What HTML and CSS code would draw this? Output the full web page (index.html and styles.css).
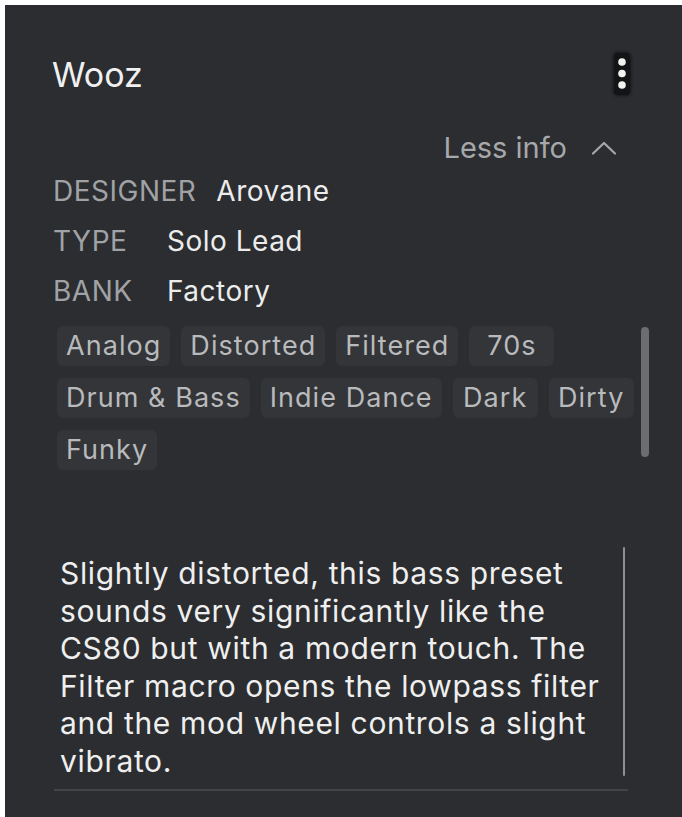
FILE: index.html
```html
<!DOCTYPE html>
<html lang="en">
<head>
<meta charset="utf-8">
<title>Wooz</title>
<link rel="stylesheet" href="styles.css">
</head>
<body>
<div class="panel">
  <div class="header">
    <div class="title">Wooz</div>
    <div class="kebab">
      <svg width="16" height="42" viewBox="0 0 16 42"><circle cx="8" cy="9" r="3.8" fill="#f2f2f2"/><circle cx="8" cy="20.5" r="3.8" fill="#f2f2f2"/><circle cx="8" cy="32" r="3.8" fill="#f2f2f2"/></svg>
    </div>
  </div>
  <div class="less">
    <span>Less info</span>
    <svg class="chev" width="26" height="14" viewBox="0 0 26 14"><path d="M2 12.5 L13 2 L24 12.5" fill="none" stroke="#a6a8ab" stroke-width="2.2" stroke-linecap="round" stroke-linejoin="round"/></svg>
  </div>
  <div class="meta">
    <div class="row"><span class="label">DESIGNER</span><span class="value">Arovane</span></div>
    <div class="row"><span class="label">TYPE</span><span class="value">Solo Lead</span></div>
    <div class="row"><span class="label">BANK</span><span class="value">Factory</span></div>
  </div>
  <div class="tags-area">
    <div class="tags">
      <span class="tag">Analog</span>
      <span class="tag">Distorted</span>
      <span class="tag">Filtered</span>
      <span class="tag">70s</span>
      <span class="tag">Drum &amp; Bass</span>
      <span class="tag">Indie Dance</span>
      <span class="tag">Dark</span>
      <span class="tag">Dirty</span>
      <span class="tag">Funky</span>
    </div>
    <div class="tags-scroll"></div>
  </div>
  <div class="desc">
    <p class="desc-text">Slightly distorted, this bass preset sounds very significantly like the CS80 but with a modern touch. The Filter macro opens the lowpass filter and the mod wheel controls a slight vibrato.</p>
    <div class="desc-scroll"></div>
  </div>
</div>
</body>
</html>
```
FILE: styles.css
```css
html, body {
  margin: 0;
  padding: 0;
  background: #ffffff;
}
body {
  font-family: Inter, "Noto Sans", "Liberation Sans", sans-serif;
  overflow: hidden;
}
.panel {
  margin: 5px 0 0 5px;
  min-height: 812px;
  box-sizing: border-box;
  background: #2b2d30;
  padding: 50px 52px 0 47px;
}
.header {
  display: flex;
  justify-content: space-between;
  align-items: center;
  height: 40px;
}
.title {
  font-size: 34px;
  line-height: 40px;
  color: #f0f0f0;
}
.kebab {
  width: 16px;
  height: 42px;
  margin-top: -2px;
  background: #131415;
  border-radius: 4px;
  box-shadow: 0 0 3px 1px #16171a;
}
.kebab svg {
  display: block;
}
.less {
  margin-top: 35px;
  display: flex;
  justify-content: flex-end;
  align-items: center;
  padding-right: 13px;
  font-size: 29px;
  line-height: 36px;
  color: #a6a8ab;
}
.chev {
  margin-left: 24px;
  margin-top: -1px;
  display: block;
}
.meta {
  padding-left: 1px;
}
.row {
  display: flex;
  height: 50px;
  line-height: 50px;
  font-size: 28px;
  letter-spacing: 0.5px;
}
.label {
  min-width: 94px;
  margin-right: 20px;
  color: #a0a2a6;
}
.value {
  color: #ececec;
}
.tags-area {
  margin-top: 10px;
  padding-left: 5px;
  display: flex;
  align-items: flex-start;
}
.tags {
  flex: none;
  width: 584px;
  display: flex;
  flex-wrap: wrap;
  gap: 12px 11px;
}
.tag {
  height: 40px;
  min-width: 85px;
  box-sizing: border-box;
  text-align: center;
  line-height: 40px;
  padding: 0 9px;
  font-size: 27px;
  letter-spacing: 1.05px;
  color: #b9babc;
  background: #333539;
  border-radius: 6px;
}
.tags-scroll {
  flex: none;
  width: 8px;
  height: 130px;
  margin: 1px 0 0 0;
  background: #6b6d70;
  border-radius: 4px;
}
.desc {
  margin: 77px 0 0 2px;
  width: 574px;
  display: flex;
  align-items: flex-start;
  padding-bottom: 9px;
  border-bottom: 2px solid #424447;
}
.desc-text {
  margin: 0;
  padding: 8px 0 0 6px;
  width: 548px;
  font-size: 30px;
  line-height: 37.5px;
  letter-spacing: 0.65px;
  color: #efefef;
}
.desc-scroll {
  flex: none;
  margin-left: auto;
  margin-right: 3px;
  width: 2px;
  height: 229px;
  background: #8e9093;
  border-radius: 1px;
}
```
